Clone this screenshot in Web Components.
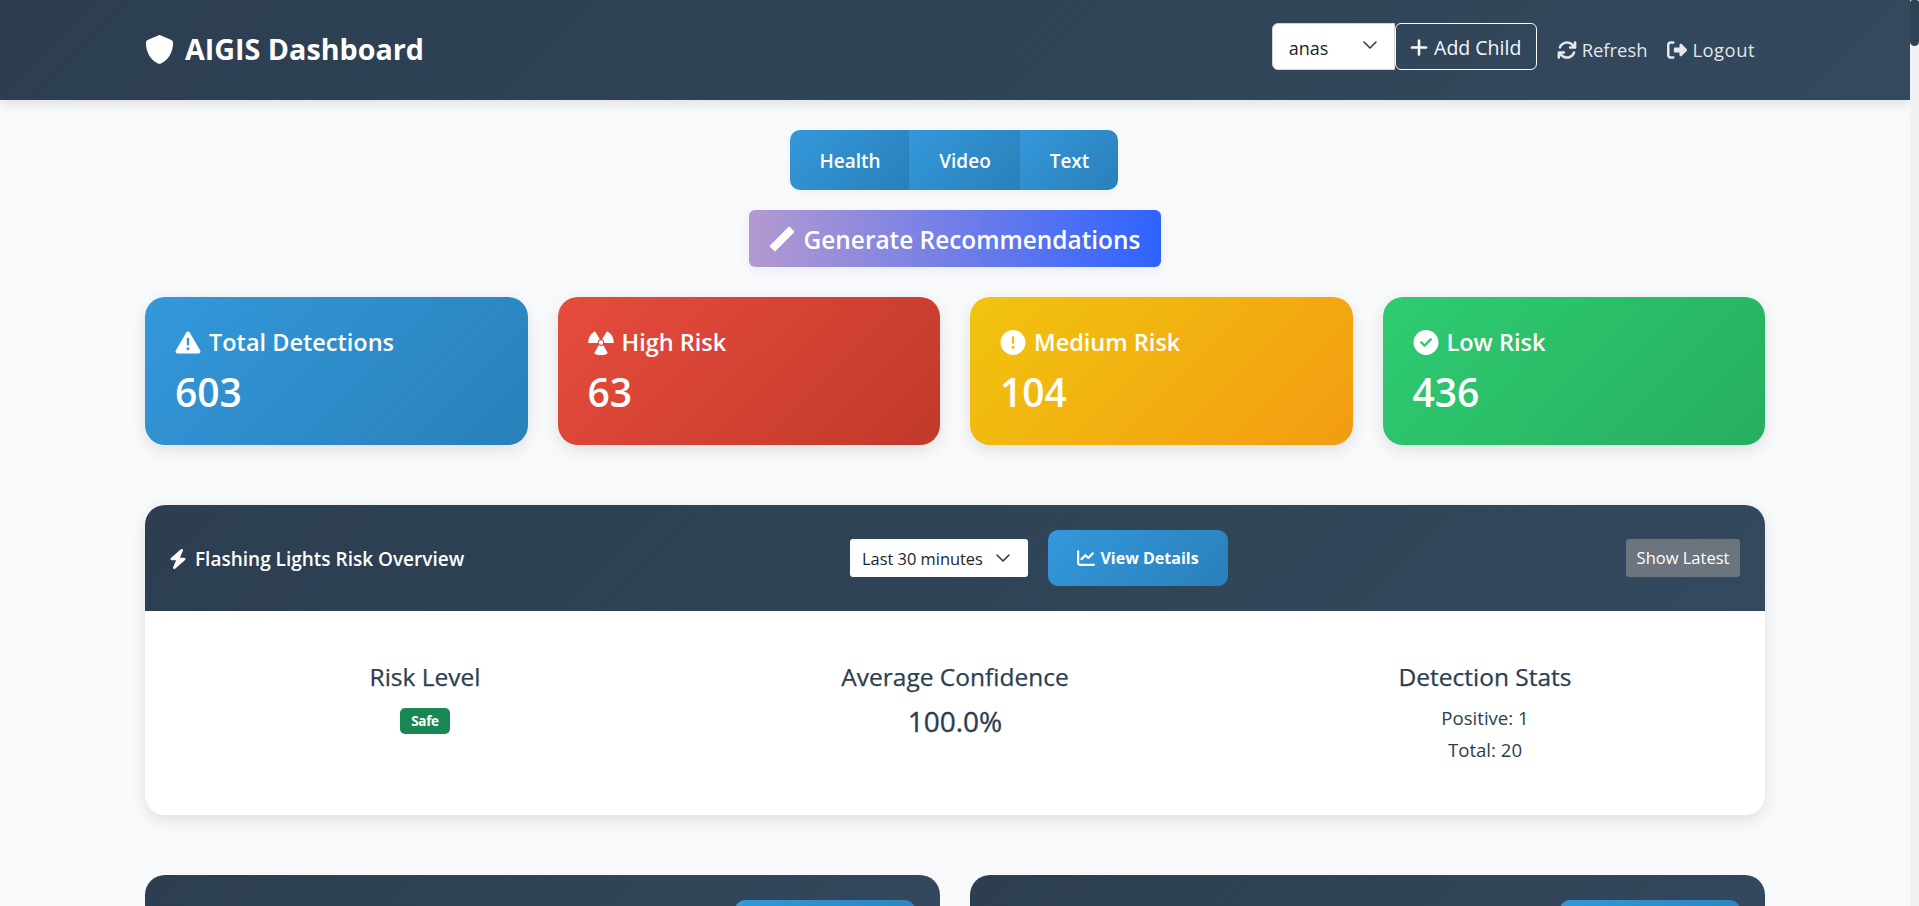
<!DOCTYPE html>
<html>
<head>
<meta charset="utf-8">
<title>AIGIS Dashboard</title>
<style>
    html, body { margin: 0; height: 100%; overflow: hidden; }
    body {
        display: flex;
        background: #f8f9fa;
        color: #2c3e50;
        font-family: "Open Sans", "Noto Sans", "Liberation Sans", sans-serif;
        font-size: 15px;
    }
    .page { flex: 1; min-width: 0; height: 906px; overflow: hidden; }
</style>
</head>
<body>
<div class="page">
    <aigis-navbar></aigis-navbar>
    <aigis-main>
        <aigis-tabs></aigis-tabs>
        <aigis-generate></aigis-generate>
        <aigis-stats>
            <aigis-stat variant="blue" icon="warn" label="Total Detections" value="603"></aigis-stat>
            <aigis-stat variant="red" icon="radiation" label="High Risk" value="63"></aigis-stat>
            <aigis-stat variant="yellow" icon="exclaim" label="Medium Risk" value="104"></aigis-stat>
            <aigis-stat variant="green" icon="check" label="Low Risk" value="436"></aigis-stat>
        </aigis-stats>
        <aigis-overview></aigis-overview>
        <aigis-lower></aigis-lower>
    </aigis-main>
</div>
<aigis-scrollbar></aigis-scrollbar>

<script>
const ICONS = {
    shield: '<svg viewBox="0 0 512 512"><path d="M256 0c4.6 0 9.2 1 13.4 2.9L457.7 82.8c22 9.3 38.4 31 38.3 57.2-.5 99.2-41.3 280.7-213.6 363.2-16.7 8-36.1 8-52.8 0C57.3 420.7 16.5 239.2 16 140c-.1-26.2 16.3-47.9 38.3-57.2L242.7 2.9C246.8 1 251.4 0 256 0z"/></svg>',
    plus: '<svg viewBox="0 0 448 512"><path d="M256 80c0-17.7-14.3-32-32-32s-32 14.3-32 32V224H48c-17.7 0-32 14.3-32 32s14.3 32 32 32H192V432c0 17.7 14.3 32 32 32s32-14.3 32-32V288H400c17.7 0 32-14.3 32-32s-14.3-32-32-32H256V80z"/></svg>',
    sync: '<svg viewBox="0 0 512 512"><path d="M105.1 202.6c7.7-21.8 20.2-42.3 37.8-59.8c62.5-62.5 163.8-62.5 226.3 0L386.3 160H336c-17.7 0-32 14.3-32 32s14.3 32 32 32H463.5c17.7 0 32-14.3 32-32V64c0-17.7-14.3-32-32-32s-32 14.3-32 32v51.2L414.4 97.6c-87.5-87.5-229.3-87.5-316.8 0C73.2 122 55.6 150.7 44.8 181.4c-5.9 16.7 2.9 34.9 19.5 40.8s34.9-2.9 40.8-19.5zM39 289.3c-5 1.5-9.8 4.2-13.7 8.2c-4 4-6.7 8.8-8.1 14c-.3 1.2-.6 2.5-.8 3.8c-.3 1.7-.4 3.4-.4 5.1V448c0 17.7 14.3 32 32 32s32-14.3 32-32V396.9l17.6 17.5c87.5 87.4 229.3 87.4 316.7 0c24.4-24.4 42.1-53.1 52.9-83.7c5.9-16.7-2.9-34.9-19.5-40.8s-34.9 2.9-40.8 19.5c-7.7 21.8-20.2 42.3-37.8 59.8c-62.5 62.5-163.8 62.5-226.3 0l-.1-.1L125.6 352H176c17.7 0 32-14.3 32-32s-14.3-32-32-32H48.4c-1.6 0-3.2 .1-4.8 .3s-3.1 .5-4.6 1z"/></svg>',
    logout: '<svg viewBox="0 0 512 512"><path d="M502.6 278.6c12.5-12.5 12.5-32.8 0-45.3l-128-128c-9.2-9.2-22.9-11.9-34.9-6.9s-19.8 16.6-19.8 29.6l0 64-112 0c-17.7 0-32 14.3-32 32l0 64c0 17.7 14.3 32 32 32l112 0 0 64c0 12.9 7.8 24.6 19.8 29.6s25.7 2.2 34.9-6.9l128-128zM160 96c17.7 0 32-14.3 32-32s-14.3-32-32-32L96 32C43 32 0 75 0 128L0 384c0 53 43 96 96 96l64 0c17.7 0 32-14.3 32-32s-14.3-32-32-32l-64 0c-17.7 0-32-14.3-32-32l0-256c0-17.7 14.3-32 32-32l64 0z"/></svg>',
    wand: '<svg viewBox="0 0 512 512"><path fill-rule="evenodd" stroke="currentColor" stroke-width="24" stroke-linejoin="round" d="M24 396L116 488L488 116L396 24ZM343 138L408 73L422 87L357 152Z"/></svg>',
    warn: '<svg viewBox="0 0 512 512"><path d="M256 32c14.2 0 27.3 7.5 34.5 19.8l216 368c7.3 12.4 7.3 27.7 .2 40.1S486.3 480 472 480H40c-14.3 0-27.6-7.7-34.7-20.1s-7-27.8 .2-40.1l216-368C228.7 39.5 241.8 32 256 32zm0 128c-13.3 0-24 10.7-24 24V296c0 13.3 10.7 24 24 24s24-10.7 24-24V184c0-13.3-10.7-24-24-24zm32 224a32 32 0 1 0 -64 0 32 32 0 1 0 64 0z"/></svg>',
    radiation: '<svg viewBox="0 0 512 512"><circle cx="256" cy="256" r="46"/><path stroke="currentColor" stroke-width="22" stroke-linejoin="round" d="M296 187L381 40A250 250 0 0 1 506 256L336 256A80 80 0 0 0 296 187ZM216 187L131 40A250 250 0 0 0 6 256L176 256A80 80 0 0 1 216 187ZM296 325L381 472A250 250 0 0 1 131 472L216 325A80 80 0 0 0 296 325Z"/></svg>',
    exclaim: '<svg viewBox="0 0 512 512"><path d="M256 512A256 256 0 1 0 256 0a256 256 0 1 0 0 512zm0-384c13.3 0 24 10.7 24 24V264c0 13.3-10.7 24-24 24s-24-10.7-24-24V152c0-13.3 10.7-24 24-24zM224 352a32 32 0 1 1 64 0 32 32 0 1 1 -64 0z"/></svg>',
    check: '<svg viewBox="0 0 512 512"><path d="M256 512A256 256 0 1 0 256 0a256 256 0 1 0 0 512zM369 209L241 337c-9.4 9.4-24.6 9.4-33.9 0l-64-64c-9.4-9.4-9.4-24.6 0-33.9s24.6-9.4 33.9 0l47 47L335 175c9.4-9.4 24.6-9.4 33.9 0s9.4 24.6 0 33.9z"/></svg>',
    bolt: '<svg viewBox="0 0 448 512"><path d="M349.4 44.6c5.9-13.7 1.5-29.7-10.6-38.5s-28.6-8-39.9 1.8l-256 224c-10 8.8-13.6 22.9-8.9 35.3S50.7 288 64 288H175.5L98.6 467.4c-5.9 13.7-1.5 29.7 10.6 38.5s28.6 8 39.9-1.8l256-224c10-8.8 13.6-22.9 8.9-35.3s-16.6-20.7-30-20.7H272.5L349.4 44.6z"/></svg>',
    chart: '<svg viewBox="0 0 512 512"><path d="M64 64c0-17.7-14.3-32-32-32S0 46.3 0 64V400c0 44.2 35.8 80 80 80H480c17.7 0 32-14.3 32-32s-14.3-32-32-32H80c-8.8 0-16-7.2-16-16V64zm406.6 86.6c12.5-12.5 12.5-32.8 0-45.3s-32.8-12.5-45.3 0L320 210.7l-57.4-57.4c-12.5-12.5-32.8-12.5-45.3 0l-112 112c-12.5 12.5-12.5 32.8 0 45.3s32.8 12.5 45.3 0L240 221.3l57.4 57.4c12.5 12.5 32.8 12.5 45.3 0l128-128z"/></svg>',
    chevron: '<svg viewBox="0 0 16 16"><path fill="none" stroke="#343a40" stroke-linecap="round" stroke-linejoin="round" stroke-width="1.6" d="m2 5 6 6 6-6"/></svg>'
};

// small helper, every element here is just a template in a shadow root
function makeElement(tag, html, setup) {
    const tpl = document.createElement('template');
    tpl.innerHTML = html;
    customElements.define(tag, class extends HTMLElement {
        constructor() {
            super();
            this.attachShadow({mode: 'open'}).appendChild(tpl.content.cloneNode(true));
        }
        connectedCallback() {
            if (setup) setup(this, this.shadowRoot);
        }
    });
}

const iconCss = `.ic { display: inline-block; fill: currentColor; flex: none; } .ic svg { display: block; width: 100%; height: 100%; fill: currentColor; }`;

makeElement('aigis-navbar', `
    <style>
        ${iconCss}
        :host {
            display: flex;
            align-items: center;
            height: 100px;
            box-sizing: border-box;
            padding: 0 145px;
            color: #fff;
            background: linear-gradient(135deg, #2c3e50, #34495e);
            box-shadow: 0 4px 12px rgba(0,0,0,.1);
            position: relative;
        }
        .brand { display: flex; align-items: center; gap: 11px; font-size: 28.7px; font-weight: 700; padding-bottom: 1px; }
        .brand .ic { width: 29px; height: 31px; }
        .brand span:last-child { margin-top: -2px; }
        .right { margin-left: auto; display: flex; align-items: center; }
        .select {
            width: 123px; height: 47px; box-sizing: border-box; margin-top: -7px;
            background: #fff; color: #212529; border: 1px solid #ced4da; border-radius: 6px 0 0 6px;
            display: flex; align-items: center; justify-content: space-between;
            padding: 2px 16px 0 16px; font-size: 18px;
        }
        .select .ic { width: 16px; height: 16px; margin-bottom: 6px; }
        .add {
            width: 142px; height: 47px; box-sizing: border-box; margin-top: -7px;
            border: 1px solid #f8f9fa; border-radius: 6px;
            display: flex; align-items: center; justify-content: center; gap: 6px;
            font-size: 19.5px; color: #f8f9fa; padding-top: 1px;
        }
        .add .ic { width: 18px; height: 21px; }
        .link { display: flex; align-items: center; gap: 5px; font-size: 18.4px; color: rgba(255,255,255,.88); margin-top: -1px; }
        .link span:last-child { margin-top: -1px; }
        .link .ic { width: 20px; height: 20px; }
        .refresh { margin-left: 20px; }
        .logout { margin-left: 20px; margin-right: 10px; letter-spacing: .5px; }
    </style>
    <div class="brand"><span class="ic">${ICONS.shield}</span><span>AIGIS Dashboard</span></div>
    <div class="right">
        <div class="select"><span>anas</span><span class="ic">${ICONS.chevron}</span></div>
        <div class="add"><span class="ic">${ICONS.plus}</span><span>Add Child</span></div>
        <div class="link refresh"><span class="ic">${ICONS.sync}</span><span>Refresh</span></div>
        <div class="link logout"><span class="ic">${ICONS.logout}</span><span>Logout</span></div>
    </div>
`);

makeElement('aigis-main', `
    <style>
        :host { display: block; padding: 30px 145px 0 145px; }
    </style>
    <slot></slot>
`);

makeElement('aigis-tabs', `
    <style>
        :host { display: flex; justify-content: center; height: 60px; padding-right: 2px; }
        .group { display: flex; border-radius: 10px; overflow: hidden; box-shadow: 0 2px 6px rgba(0,0,0,.04); }
        .tab {
            display: flex; align-items: center; justify-content: center; padding-top: 2px; box-sizing: border-box;
            color: #fff; font-size: 19px; font-weight: 600;
            background: linear-gradient(135deg, #3498db, #2980b9);
        }
        .a { width: 119px; padding-left: 1px; } .b { width: 111px; padding-left: 1px; } .c { width: 98px; padding-left: 1px; }
    </style>
    <div class="group">
        <div class="tab a">Health</div>
        <div class="tab b">Video</div>
        <div class="tab c">Text</div>
    </div>
`);

makeElement('aigis-generate', `
    <style>
        ${iconCss}
        :host { display: flex; justify-content: center; margin-top: 20px; height: 57px; padding-right: 1px; }
        .btn {
            width: 412px; box-sizing: border-box; border-radius: 6px; padding-top: 1px;
            display: flex; align-items: center; justify-content: center; gap: 9px;
            color: #fff; font-size: 24.4px; font-weight: 600;
            background: linear-gradient(90deg, #b499d0, #2e63ff);
            box-shadow: 0 4px 12px rgba(70,90,255,.07);
        }
        .btn .ic { width: 26px; height: 26px; }
    </style>
    <div class="btn"><span class="ic">${ICONS.wand}</span><span>Generate Recommendations</span></div>
`);

makeElement('aigis-stats', `
    <style>
        :host { display: grid; grid-template-columns: repeat(4, 1fr); gap: 30px; margin-top: 30px; }
    </style>
    <slot></slot>
`);

makeElement('aigis-stat', `
    <style>
        ${iconCss}
        :host {
            display: flex; flex-direction: column; height: 148px; box-sizing: border-box;
            padding: 28px 30px 0 30px; border-radius: 20px; color: #fff;
            box-shadow: 0 5px 15px rgba(0,0,0,.1);
        }
        :host([variant=blue]) { background: linear-gradient(135deg, #3498db, #2980b9); }
        :host([variant=red]) { background: linear-gradient(135deg, #e74c3c, #c0392b); }
        :host([variant=yellow]) { background: linear-gradient(135deg, #f1c40f, #f39c12); }
        :host([variant=green]) { background: linear-gradient(135deg, #2ecc71, #27ae60); }
        .title { display: flex; align-items: center; gap: 8px; font-size: 23.5px; font-weight: 600; height: 34px; }
        .title .ic { width: 26px; height: 25px; }
        .value { font-size: 39px; font-weight: 600; line-height: 50px; margin-top: 8px; }
    </style>
    <div class="title"><span class="ic"></span><span class="label"></span></div>
    <div class="value"></div>
`, (el, root) => {
    root.querySelector('.ic').innerHTML = ICONS[el.getAttribute('icon')];
    root.querySelector('.label').textContent = el.getAttribute('label');
    root.querySelector('.value').textContent = el.getAttribute('value');
});

makeElement('aigis-overview', `
    <style>
        ${iconCss}
        :host {
            display: block; margin-top: 60px; height: 310px; background: #fff; border-radius: 20px;
            box-shadow: 0 5px 15px rgba(0,0,0,.1); overflow: hidden;
        }
        .head {
            height: 106px; box-sizing: border-box; padding: 0 25px 0 24px; color: #fff;
            display: grid; grid-template-columns: 681px auto 1fr; align-items: center;
            background: linear-gradient(135deg, #2c3e50, #34495e);
        }
        .title { display: flex; align-items: center; gap: 8px; font-size: 19px; font-weight: 600; padding-top: 1px; }
        .title .ic { width: 18px; height: 20px; }
        .mid { display: flex; align-items: center; gap: 20px; }
        .range {
            width: 178px; height: 38px; box-sizing: border-box; background: #fff; color: #212529;
            border-radius: 3px; display: flex; align-items: center; justify-content: space-between;
            padding: 0 17px 0 12px; font-size: 16.4px;
        }
        .range .ic { width: 16px; height: 16px; }
        .details {
            width: 180px; height: 56px; border-radius: 10px; display: flex; align-items: center; justify-content: center; gap: 5px;
            background: linear-gradient(135deg, #3498db, #2980b9); color: #fff; font-size: 16px; font-weight: 700;
        }
        .details .ic { width: 18px; height: 18px; }
        .latest {
            justify-self: end; width: 114px; height: 38px; border-radius: 3px; background: #6c757d; color: #fff;
            display: flex; align-items: center; justify-content: center; font-size: 16.5px; padding-bottom: 1px; box-sizing: border-box;
        }
        .cols { display: grid; grid-template-columns: repeat(3, 530px); padding: 44px 15px 0 15px; text-align: center; }
        h4 { margin: 0; font-size: 24.5px; font-weight: 500; line-height: 44px; height: 44px; color: #2c3e50; -webkit-text-stroke: .25px #2c3e50; }
        .badge {
            display: inline-flex; align-items: center; justify-content: center; margin-top: 9px;
            width: 50px; height: 26px; border-radius: 5px; background: #198754; color: #fff; font-size: 13.5px; font-weight: 700; letter-spacing: -.3px;
        }
        .pct { font-size: 28px; font-weight: 500; line-height: 40px; margin-top: 2px; -webkit-text-stroke: .35px #2c3e50; }
        p { margin: 0; font-size: 18.6px; line-height: 32px; }
        .stats { padding-top: 3px; }
    </style>
    <div class="head">
        <div class="title"><span class="ic">${ICONS.bolt}</span><span>Flashing Lights Risk Overview</span></div>
        <div class="mid">
            <div class="range"><span>Last 30 minutes</span><span class="ic">${ICONS.chevron}</span></div>
            <div class="details"><span class="ic">${ICONS.chart}</span><span>View Details</span></div>
        </div>
        <div class="latest">Show Latest</div>
    </div>
    <div class="cols">
        <div><h4>Risk Level</h4><span class="badge">Safe</span></div>
        <div><h4>Average Confidence</h4><div class="pct">100.0%</div></div>
        <div><h4>Detection Stats</h4><div class="stats"><p>Positive: 1</p><p>Total: 20</p></div></div>
    </div>
`);

makeElement('aigis-lower', `
    <style>
        :host { display: grid; grid-template-columns: repeat(2, 1fr); gap: 30px; margin-top: 60px; }
        .panel {
            height: 106px; box-sizing: border-box; padding: 25px 25px 0 0; border-radius: 20px 20px 0 0;
            display: flex; justify-content: flex-end;
            background: linear-gradient(135deg, #2c3e50, #34495e);
        }
        .btn { width: 180px; height: 56px; border-radius: 10px; background: linear-gradient(135deg, #3498db, #2980b9); }
    </style>
    <div class="panel"><div class="btn"></div></div>
    <div class="panel"><div class="btn"></div></div>
`);

makeElement('aigis-scrollbar', `
    <style>
        :host { display: block; flex: none; width: 9px; height: 906px; background: #f1f1f3; }
        .thumb { width: 9px; height: 46px; background: #2f4356; border-radius: 3px 3px 5px 5px; }
    </style>
    <div class="thumb"></div>
`);
</script>
</body>
</html>
